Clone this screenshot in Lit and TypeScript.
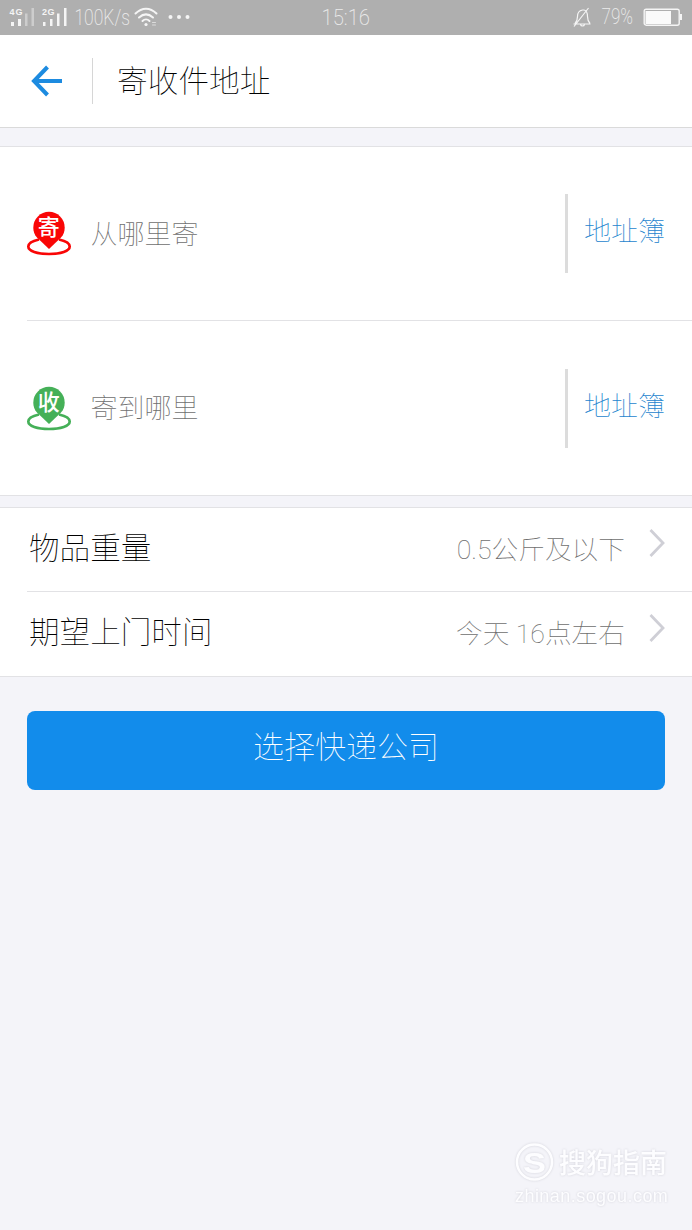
import { LitElement, html, css } from "lit";
import { customElement, property } from "lit/decorators.js";

@customElement("status-bar")
class StatusBar extends LitElement {
  static styles = css`
    :host { display: block; height: 35px; background: #afafaf; }
    .bar { display: grid; grid-template-columns: 1fr auto 1fr; height: 34px; align-items: center; }
    .left { display: flex; align-items: center; padding-left: 9px; height: 34px; }
    .right { display: flex; align-items: center; justify-content: flex-end; padding-right: 9px; height: 34px; }
    svg { display: block; flex: none; overflow: visible; }
    .info { font: 200 22px Roboto, sans-serif; fill: #ececec; }
    .speed { margin-left: 5px; }
    .dots { margin-left: 10px; }
    .wifi { margin-left: 3px; }
    .pct { margin: 0 10px 0 9px; }
    .tag { font: 700 9px "Liberation Sans", sans-serif; }
  `;
  render() {
    return html`<div class="bar">
      <div class="left">
        <svg width="60" height="34" fill="#f5f5f5">
          <text class="tag" x="0.5" y="15" textLength="13">4G</text>
          <text class="tag" x="33" y="15" textLength="12.5">2G</text>
          <path d="M2 22h3v4h-3zM9 19h3v7h-3zM34 22h2.500v4h-2.500zM41 19h2.500v7h-2.500zM48 13.500h2.500v12.500h-2.500zM55 8h2.500v18h-2.500z" />
          <path fill="#cdcdcd" d="M16 13.500h2.500v12.500h-2.500zM22.500 8h2.500v18h-2.500z" />
        </svg>
        <svg class="speed" width="57" height="34">
          <text class="info" x="0.500" y="24.500" textLength="55.5" lengthAdjust="spacingAndGlyphs">100K/s</text>
        </svg>
        <svg class="wifi" width="24" height="34" fill="none" stroke="#f5f5f5" stroke-width="2" stroke-linecap="round">
          <path d="M1.500 13.500C8 7 16 7 22.500 13.500M5 17.500c4.500-4 9.500-4 14 0M8.500 21c2-2 5-2 7 0" />
          <circle cx="12" cy="24.500" r="1.600" fill="#f5f5f5" stroke="none" />
          <path stroke-width="1" stroke="#dcdcdc" d="M18.500 22.500h3M18.500 25h3" />
        </svg>
        <svg class="dots" width="22" height="34" fill="#f5f5f5">
          <circle cx="2.500" cy="17" r="2" /><circle cx="11" cy="17" r="2" /><circle cx="19.500" cy="17" r="2" />
        </svg>
      </div>
      <svg width="50" height="34">
        <text class="info" x="0.500" y="24.500" textLength="48.5" lengthAdjust="spacingAndGlyphs">15:16</text>
      </svg>
      <div class="right">
        <svg width="20" height="34" fill="none" stroke="#f5f5f5" stroke-width="1.200">
          <path d="M1.500 24h17M3 23.500c2-2 2.500-3.500 2.500-7 0-3.500 2-6 5-6.500h1.500c2.500.5 3.500 3 3.500 6.500s.5 5 2.500 7M8.500 24.500c.5 2 3.500 2 4 0M2 26.500L16.500 8" />
        </svg>
        <svg class="pct" width="33" height="34">
          <text class="info" x="0.500" y="23.500" textLength="31.5" lengthAdjust="spacingAndGlyphs">79%</text>
        </svg>
        <svg width="39" height="34">
          <rect x="0.200" y="9.200" width="35" height="16" rx="2" fill="none" stroke="#f5f5f5" stroke-width="1.400" />
          <rect x="1.500" y="11" width="25.500" height="13" fill="#fafafa" />
          <rect x="36" y="14" width="2" height="6" fill="#f5f5f5" />
        </svg>
      </div>
    </div>`;
  }
}

@customElement("address-row")
class AddressRow extends LitElement {
  @property() mark = "";
  @property() hint = "";
  @property() color = "";
  static styles = css`
    :host { display: block; height: 100%; }
    .row { display: flex; align-items: center; box-sizing: border-box; height: 100%; padding: 0 28px 0 26px; font: 100 27px/40px "Noto Sans CJK SC", sans-serif; white-space: nowrap; }
    svg { display: block; flex: none; }
    .glyph { font: 500 22px "Noto Sans CJK SC", sans-serif; }
    .hint { flex: 1; padding: 0 0 2px 18.500px; color: #6e6e6e; }
    .rule { width: 3px; height: 79px; background: #dcdcdc; }
    .book { width: 80px; padding: 0 0 7px 16px; color: #1d84ce; }
  `;
  render() {
    return html`<div class="row">
      <svg width="46" height="45" viewBox="0 0 46 45">
        <path d="M13 28.500C6 30 2.300 32.500 2.300 35.500c0 4.500 9 7.500 20.700 7.500s20.700-3 20.700-7.500c0-3-3.700-5.500-10.700-7" fill="none" stroke=${this.color} stroke-width="2.700" />
        <path d="M23 38L11 26.500C8.500 24 7.300 20.500 7.300 16.500a15.700 15.700 0 0 1 31.400 0c0 4-1.200 7.500-3.700 10z" fill=${this.color} />
        <text class="glyph" x="22.800" y="24" text-anchor="middle" fill="#fff">${this.mark}</text>
      </svg>
      <span class="hint">${this.hint}</span>
      <span class="rule"></span>
      <span class="book">地址簿</span>
    </div>`;
  }
}

@customElement("option-row")
class OptionRow extends LitElement {
  @property() label = "";
  @property() value = "";
  static styles = css`
    :host { display: block; height: 100%; }
    .row { display: flex; align-items: center; height: 100%; box-sizing: border-box; padding: 0 27px 0 29px; font: 100 30.600px/44px "Noto Sans CJK SC", sans-serif; white-space: nowrap; }
    .label { flex: 1; color: #000; padding-bottom: 8px; }
    .value { font-family: Roboto, "Noto Sans CJK SC", sans-serif; font-size: 26.700px; color: #6e6e6e; }
    svg { display: block; margin: 0 0 13px 24px; }
  `;
  render() {
    return html`<div class="row">
      <span class="label">${this.label}</span>
      <span class="value">${this.value}</span>
      <svg width="16" height="28" fill="none" stroke="#cfcfd6" stroke-width="2.800"><path d="M1.500 1L14 14 1.500 27" /></svg>
    </div>`;
  }
}

@customElement("app-root")
class AppRoot extends LitElement {
  static styles = css`
    :host { display: block; height: 1230px; background: #f4f4f9; font-family: "Noto Sans CJK SC", sans-serif; overflow: hidden; }
    .page { display: flex; flex-direction: column; height: 1230px; }
    .head { display: flex; align-items: center; box-sizing: border-box; height: 93px; background: #fff; border-bottom: 1px solid #dadada; padding: 0 0 1px 30px; }
    .head svg { display: block; }
    .sep { width: 1px; height: 46px; margin-left: 30px; background: #d6d6d6; }
    .title { margin-left: 24px; padding-bottom: 4px; font-size: 30.700px; line-height: 44px; font-weight: 100; color: #000; }
    .card { display: grid; background: #fff; border-top: 1px solid #e2e2e5; border-bottom: 1px solid #e2e2e5; }
    .first { margin-top: 18px; grid-template-rows: 173px 1px 174px; }
    .second { margin-top: 11px; grid-template-rows: 83px 1px 84px; }
    .line { margin-left: 27px; background: #e2e2e5; }
    .button { display: block; margin: 34px 27px 0; height: 79px; border: 0; border-radius: 8px; padding: 0 0 11px; background: #128ceb; color: #fff; font: 100 31px/44px "Noto Sans CJK SC", sans-serif; }
    .mark { margin: auto 22px 22px auto; width: 155px; color: #fdfdff; filter: drop-shadow(0 0 1px #d2d2da); }
    .brand { display: flex; align-items: center; gap: 5px; height: 40px; font: 500 27px/40px "Noto Sans CJK SC", sans-serif; white-space: nowrap; }
    .brand span { padding-bottom: 5px; }
    .brand svg { display: block; flex: none; margin-bottom: 4px; }
    .site { font: 400 18px/24px "Liberation Sans", sans-serif; letter-spacing: 0.450px; }
    .logo { font: 700 29px "Liberation Sans", sans-serif; }
  `;
  render() {
    return html`<div class="page">
      <status-bar></status-bar>
      <div class="head">
        <svg width="32" height="32" fill="none" stroke="#1d8be0" stroke-width="4"><path d="M17.500 2L4 16l13.500 14M4 16H32" /></svg>
        <span class="sep"></span>
        <span class="title">寄收件地址</span>
      </div>
      <div class="card first">
        <address-row mark="寄" hint="从哪里寄" color="#f90606"></address-row>
        <div class="line"></div>
        <address-row mark="收" hint="寄到哪里" color="#45b058"></address-row>
      </div>
      <div class="card second">
        <option-row label="物品重量" value="0.5公斤及以下"></option-row>
        <div class="line"></div>
        <option-row label="期望上门时间" value="今天 16点左右"></option-row>
      </div>
      <button class="button">选择快递公司</button>
      <div class="mark">
        <div class="brand">
          <svg width="39" height="40" fill="none" stroke="#fdfdff" stroke-width="2.500">
            <circle cx="19.500" cy="20" r="17.500" />
            <text class="logo" x="8" y="30.500" textLength="23" lengthAdjust="spacingAndGlyphs" fill="#fdfdff" stroke="none">S</text>
          </svg>
          <span>搜狗指南</span>
        </div>
        <div class="site">zhinan.sogou.com</div>
      </div>
    </div>`;
  }
}
